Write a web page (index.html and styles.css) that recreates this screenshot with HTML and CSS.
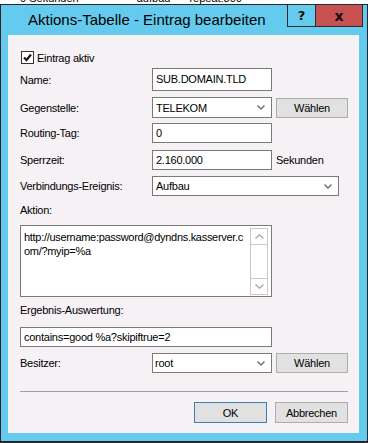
FILE: index.html
```html
<!DOCTYPE html>
<html>
<head>
    <title>Aktions-Tabelle - Eintrag bearbeiten</title>
    <link rel="stylesheet" href="styles.css">
</head>
<body>
    <!-- list behind the dialog, only the lower edge is visible -->
    <div class="desk">
        <div class="desk-line">
            <span class="c1">0 Sekunden</span>
            <span class="c2">aufbau</span>
            <span class="c3">repeat:300</span>
        </div>
    </div>

    <div class="window">
        <div class="titlebar">
            <div class="title">Aktions-Tabelle - Eintrag bearbeiten</div>
            <div class="caption-btns">
                <div class="cbtn help">?</div>
                <div class="cbtn close">x</div>
            </div>
        </div>

        <div class="client">
            <div class="check-row">
                <span class="checkbox">
                    <svg width="11" height="11" viewBox="0 0 11 11"><path d="M2 5.5 L4.5 8 L9 2.5" fill="none" stroke="#1a1a1a" stroke-width="2.2"/></svg>
                </span>
                <span>Eintrag aktiv</span>
            </div>

            <div class="row r-name">
                <span class="lbl">Name:</span>
                <div class="edit">SUB.DOMAIN.TLD</div>
            </div>

            <div class="row r-gegen">
                <span class="lbl">Gegenstelle:</span>
                <div class="combo">
                    <span>TELEKOM</span>
                    <svg class="arrow" width="8" height="5" viewBox="0 0 8 5"><path d="M0.5 0.5 L4 4 L7.5 0.5" fill="none" stroke="#6a6a6a" stroke-width="1.4"/></svg>
                </div>
                <div class="btn pick">Wählen</div>
            </div>

            <div class="row r-routing">
                <span class="lbl">Routing-Tag:</span>
                <div class="edit">0</div>
            </div>

            <div class="row r-sperr">
                <span class="lbl">Sperrzeit:</span>
                <div class="edit">2.160.000</div>
                <span class="unit">Sekunden</span>
            </div>

            <div class="row r-verb">
                <span class="lbl">Verbindungs-Ereignis:</span>
                <div class="combo wide">
                    <span>Aufbau</span>
                    <svg class="arrow" width="8" height="5" viewBox="0 0 8 5"><path d="M0.5 0.5 L4 4 L7.5 0.5" fill="none" stroke="#6a6a6a" stroke-width="1.4"/></svg>
                </div>
            </div>

            <div class="caption r-aktion">Aktion:</div>
            <div class="memo">
                <div class="memo-text">http://username:password@dyndns.kasserver.c<br>om/?myip=%a</div>
                <div class="vscroll">
                    <div class="sb-btn">
                        <svg width="9" height="5" viewBox="0 0 9 5"><path d="M0.5 4.5 L4.5 0.7 L8.5 4.5" fill="none" stroke="#a6a6a6" stroke-width="1.2"/></svg>
                    </div>
                    <div class="sb-track"></div>
                    <div class="sb-btn">
                        <svg width="9" height="5" viewBox="0 0 9 5"><path d="M0.5 0.5 L4.5 4.3 L8.5 0.5" fill="none" stroke="#a6a6a6" stroke-width="1.2"/></svg>
                    </div>
                </div>
            </div>

            <div class="caption r-ergebnis">Ergebnis-Auswertung:</div>
            <div class="edit long">contains=good %a?skipiftrue=2</div>

            <div class="row r-besitzer">
                <span class="lbl">Besitzer:</span>
                <div class="combo small">
                    <span>root</span>
                    <svg class="arrow" width="8" height="5" viewBox="0 0 8 5"><path d="M0.5 0.5 L4 4 L7.5 0.5" fill="none" stroke="#6a6a6a" stroke-width="1.4"/></svg>
                </div>
                <div class="btn pick">Wählen</div>
            </div>

            <div class="separator"></div>

            <div class="buttons">
                <div class="btn ok">OK</div>
                <div class="btn">Abbrechen</div>
            </div>
        </div>
    </div>
</body>
</html>
```

FILE: styles.css
```css
body {
    margin: 0;
    width: 368px;
    height: 443px;
    overflow: hidden;
    background: #ffffff;
    font-family: 'Liberation Sans', Arial, sans-serif;
    font-size: 11px;
    color: #000;
}

.desk {
    height: 4px;
    overflow: hidden;
}

.desk-line {
    margin-top: -8px;
    height: 12px;
    line-height: 12px;
    display: flex;
}

.desk-line .c1 { margin-left: 20px; }
.desk-line .c2 { margin-left: 58px; }
.desk-line .c3 { margin-left: 19px; }

.window {
    width: 366px;
    height: 436px;
    border: 1px solid #262626;
    border-bottom-width: 3px;
    background: #65cbee;
    display: flex;
    flex-direction: column;
}

.titlebar {
    height: 30px;
    display: flex;
    align-items: flex-start;
}

.title {
    flex: 1;
    padding-left: 27px;
    font-size: 15px;
    line-height: 30px;
}

.caption-btns {
    display: flex;
    margin-top: -1px;
    margin-right: 4px;
}

.cbtn {
    height: 21px;
    border: 1px solid #2c2c2c;
    display: flex;
    align-items: center;
    justify-content: center;
    font-family: 'DejaVu Sans', sans-serif;
    font-weight: bold;
    font-size: 13px;
    color: #111;
}

.cbtn.help {
    width: 27px;
    border-right: none;
}

.cbtn.close {
    width: 46px;
    background: #c75050;
    font-size: 14px;
}

.client {
    margin-left: 7px;
    width: 351px;
    height: 398px;
    background: #f5f1f5;
    box-sizing: border-box;
    padding: 16px 11px 0 12px;
    display: flex;
    flex-direction: column;
    letter-spacing: -0.25px;
}

.check-row {
    height: 13px;
    display: flex;
    align-items: center;
    gap: 3px;
}

.checkbox {
    width: 11px;
    height: 11px;
    border: 1px solid #333;
    background: #fff;
    display: flex;
    margin-left: 1px;
}

.row {
    display: flex;
    align-items: center;
}

.lbl {
    width: 132px;
    flex: none;
}

.edit,
.combo {
    box-sizing: border-box;
    width: 120px;
    height: 20px;
    border: 1px solid #7a7a7a;
    background: #fff;
    padding-left: 3px;
    line-height: 18px;
    white-space: nowrap;
}

.combo {
    display: flex;
    align-items: center;
    justify-content: space-between;
    padding-right: 6px;
}

.combo.wide { width: 187px; }
.combo.small { padding-left: 2px; }

.btn {
    box-sizing: border-box;
    width: 72px;
    height: 21px;
    border: 1px solid #adadad;
    background: #e1e1e1;
    display: flex;
    align-items: center;
    justify-content: center;
}

.pick { margin-left: 4px; height: 20px; }

.unit { margin-left: 4px; }

.r-name { margin-top: 4px; }
.r-name .edit { height: 23px; line-height: 21px; }
.r-gegen { margin-top: 6px; }
.r-gegen .combo { height: 21px; }
.r-routing { margin-top: 5px; }
.r-sperr { margin-top: 7px; }
.r-verb { margin-top: 6px; }

.caption {
    line-height: 13px;
}

.r-aktion { margin-top: 8px; }
.r-ergebnis { margin-top: 7px; }

.memo {
    margin-top: 8px;
    box-sizing: border-box;
    width: 252px;
    height: 72px;
    border: 1px solid #7a7a7a;
    background: #fff;
    display: flex;
    padding: 2px 3px 1px 0;
}

.memo-text {
    flex: 1;
    padding-left: 3px;
    line-height: 14px;
    margin-top: 2px;
    letter-spacing: -0.3px;
    white-space: nowrap;
    overflow: hidden;
}

.vscroll {
    width: 16px;
    flex: none;
    border: 1px solid #c9c9c9;
    display: flex;
    flex-direction: column;
}

.sb-btn {
    height: 15px;
    display: flex;
    align-items: center;
    justify-content: center;
}

.sb-btn:first-child { border-bottom: 1px solid #c9c9c9; }
.sb-btn:last-child { border-top: 1px solid #c9c9c9; }

.sb-track { flex: 1; }

.edit.long {
    width: 252px;
    margin-top: 10px;
}

.r-besitzer { margin-top: 6px; }

.separator {
    margin-top: 18px;
    height: 1px;
    background: #a0a0a0;
}

.buttons {
    margin-top: 10px;
    display: flex;
    justify-content: flex-end;
    gap: 8px;
}

.buttons .btn { width: 73px; }
.buttons .btn.ok { border-color: #3c7fb1; }
```
